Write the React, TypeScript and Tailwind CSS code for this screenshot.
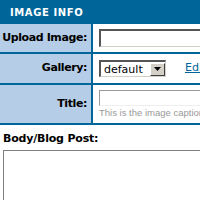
import React from "react";

export default function App() {
  const lbl = "w-[93px] shrink-0 bg-[#b5cde6] border-r-2 border-[#006699] flex items-center justify-end pr-[4px] font-bold text-[11px] text-black whitespace-nowrap tracking-[-0.4px]";
  return (
    <div className="w-[200px] h-[200px] overflow-hidden bg-white" style={{ fontFamily: '"DejaVu Sans", Verdana, sans-serif' }}>
      <div className="w-[420px]">
        <div className="h-[24px] bg-[#006699] flex items-center pl-[10px] text-white font-bold text-[10px] tracking-[0.6px]">
          IMAGE INFO
        </div>
        <div className="flex h-[30px] border-b-2 border-[#006699]">
          <div className={lbl}>Upload Image:</div>
          <div className="flex items-center pl-[6px]">
            <div className="w-[300px] h-[18px] bg-white border-t-2 border-l-2 border-t-[#555] border-l-[#555] border-b border-r border-b-[#d4d0c8] border-r-[#d4d0c8]" />
          </div>
        </div>
        <div className="flex h-[31px] border-b-2 border-[#006699]">
          <div className={lbl}>Gallery:</div>
          <div className="flex items-center pl-[6px]">
            <div className="flex items-center w-[67px] h-[17px] border-t-2 border-l-2 border-[#555] border-b border-r border-b-[#d4d0c8] border-r-[#d4d0c8] bg-white">
              <span className="flex-1 text-[11px] pl-[3px] leading-none">default</span>
              <div className="w-[15px] h-[13px] bg-[#d4d0c8] border border-t-white border-l-white border-b-[#404040] border-r-[#404040] flex items-center justify-center">
                <svg width="7" height="4" viewBox="0 0 7 4"><path d="M0 0h7L3.5 4z" fill="#000" /></svg>
              </div>
            </div>
            <a className="ml-[19px] text-[11px] text-[#006699] underline whitespace-nowrap">Edit</a>
          </div>
        </div>
        <div className="flex h-[40px] border-b-2 border-[#006699]">
          <div className={lbl}>Title:</div>
          <div className="flex flex-col pl-[6px] pt-[5px]">
            <div className="w-[300px] h-[16px] bg-white border-t border-l border-[#999] border-b border-r border-b-[#eee] border-r-[#eee]" />
            <div className="text-[9.5px] text-[#999] leading-[12px] mt-[1px] whitespace-nowrap" style={{ fontFamily: '"Liberation Sans", Arial, sans-serif' }}>This is the image caption</div>
          </div>
        </div>
        <div className="pl-[3px] pt-[7px] font-bold text-[11px] text-black leading-[14px] tracking-[-0.2px]">Body/Blog Post:</div>
        <div className="ml-[3px] mt-[4px] w-[400px] h-[100px] border border-[#808080] border-b-[#d4d0c8] border-r-[#d4d0c8]" />
      </div>
    </div>
  );
}
